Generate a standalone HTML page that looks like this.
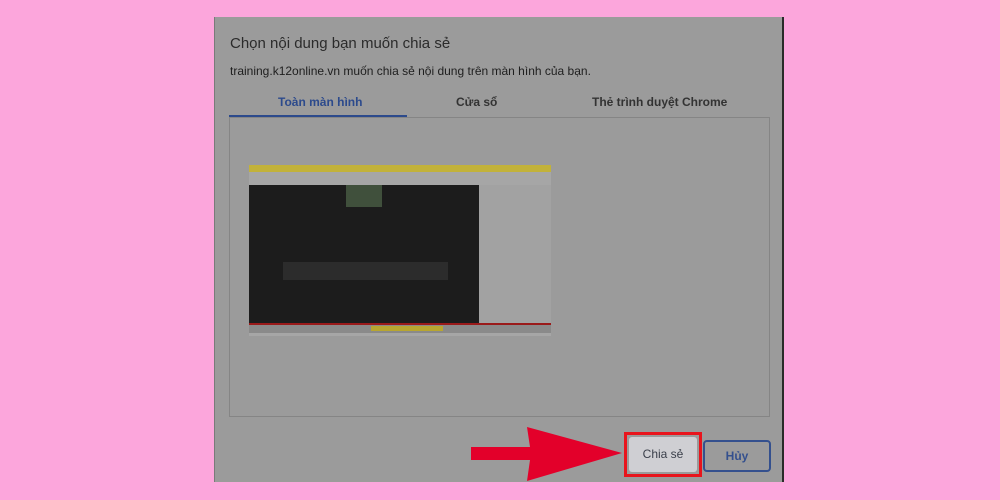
<!DOCTYPE html>
<html><head><meta charset="utf-8"><style>
*{margin:0;padding:0;box-sizing:border-box}
body{width:1000px;height:500px;background:#fca6dc;position:relative;overflow:hidden;font-family:"Liberation Sans","DejaVu Sans",sans-serif}
.dlg{position:absolute;left:214px;top:17px;width:570px;height:465px;background:#9b9b9b;border-right:2px solid #2a2a2a;border-left:1px solid #7a7a7a}
.a{position:absolute}
</style></head><body>
<div class="dlg">
<div class="a" style="left:15px;top:18px;font-size:15px;color:#2b2b2b">Chọn nội dung bạn muốn chia sẻ</div>
<div class="a" style="left:15px;top:47px;font-size:12px;color:#1e1e1e">training.k12online.vn muốn chia sẻ nội dung trên màn hình của bạn.</div>
<div class="a" style="left:63px;top:78px;font-size:12px;font-weight:bold;color:#2c4a8c">Toàn màn hình</div>
<div class="a" style="left:241px;top:78px;font-size:12px;font-weight:bold;color:#333">Cửa sổ</div>
<div class="a" style="left:377px;top:78px;font-size:12px;font-weight:bold;color:#333">Thẻ trình duyệt Chrome</div>
<div class="a" style="left:14px;top:98px;width:178px;height:3px;background:#2c4a8c"></div>
<div class="a" style="left:14px;top:100px;width:541px;height:300px;border:1px solid #858585"></div>
<!-- thumbnail -->
<div class="a" style="left:34px;top:148px;width:302px;height:171px;background:#a6a6a6">
 <div class="a" style="left:0;top:0;width:302px;height:7px;background:#c2b23a"></div>
 <div class="a" style="left:0;top:20px;width:230px;height:139px;background:#1c1c1c"></div>
 <div class="a" style="left:97px;top:20px;width:36px;height:22px;background:#40503c"></div>
 <div class="a" style="left:34px;top:97px;width:165px;height:18px;background:#2c2c2c"></div>
 <div class="a" style="left:230px;top:20px;width:72px;height:139px;background:#a2a2a2"></div>
 <div class="a" style="left:0;top:158px;width:302px;height:2px;background:#9a1a1a"></div>
 <div class="a" style="left:0;top:160px;width:302px;height:8px;background:#8a8a8a"></div>
 <div class="a" style="left:122px;top:161px;width:72px;height:5px;background:#b8a630"></div>
</div>
<!-- buttons -->
<div class="a" style="left:409px;top:415px;width:78px;height:45px;border:3px solid #e8141c;background:#9b9b9b"></div>
<div class="a" style="left:414px;top:420px;width:68px;height:35px;background:#cfcfd3;border-radius:3px;font-size:12px;color:#3a3f4a;text-align:center;line-height:35px">Chia sẻ</div>
<div class="a" style="left:488px;top:423px;width:68px;height:32px;border:2px solid #34508e;border-radius:4px;font-size:12px;font-weight:bold;color:#34508e;text-align:center;line-height:28px">Hủy</div>
</div>
<svg class="a" style="left:0;top:0" width="1000" height="500">
<polygon points="471,447 530,447 527,427 622,453 527,481 530,460 471,460" fill="#e3002a"/>
</svg>
</body></html>
